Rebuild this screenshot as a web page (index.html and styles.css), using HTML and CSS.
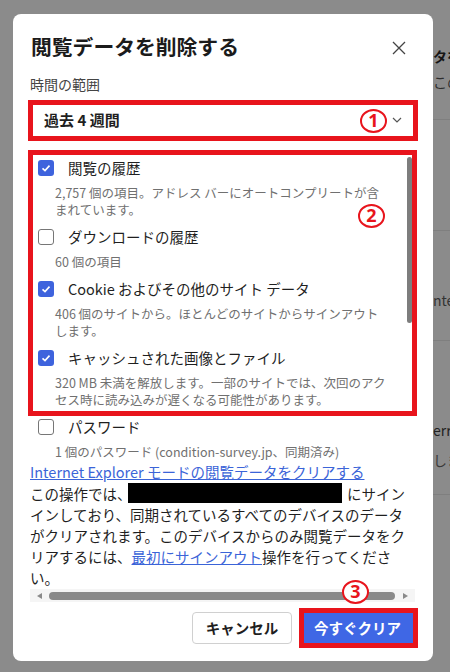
FILE: index.html
```html
<!DOCTYPE html>
<html lang="ja">
<head>
<meta charset="utf-8">
<title>閲覧データを削除する</title>
<link rel="stylesheet" href="styles.css">
</head>
<body>
<div class="behind">
  <div class="bh-title">タを削除</div>
  <div class="bh-text">この</div>
  <div class="bh-line l1"></div>
  <div class="bh-line l2"></div>
  <div class="bh-text t3">nternet</div>
  <div class="bh-line l3"></div>
  <div class="bh-text t4">error</div>
  <div class="bh-text t5">します</div>
  <div class="bh-line l4"></div>
</div>

<div class="dialog">
  <div class="title-row">
    <h1 class="title">閲覧データを削除する</h1>
    <svg class="close" width="14" height="14" viewBox="0 0 14 14"><path d="M1 1 L13 13 M13 1 L1 13" stroke="#444" stroke-width="1.3" fill="none"/></svg>
  </div>
  <div class="field-label">時間の範囲</div>
  <div class="select">
    <span class="select-value">過去 4 週間</span>
    <svg class="chevron" width="10" height="6" viewBox="0 0 10 6"><polyline points="1,1 5,5 9,1" stroke="#555" stroke-width="1.2" fill="none"/></svg>
  </div>

  <div class="scroller">
    <div class="item">
      <div class="row"><span class="cb on"><svg width="16" height="16" viewBox="0 0 16 16"><polyline points="4.5,8.3 7,10.6 11.5,5.6" stroke="#fff" stroke-width="1.6" fill="none"/></svg></span><span class="label">閲覧の履歴</span></div>
      <div class="desc">2,757 個の項目。アドレス バーにオートコンプリートが含<br>まれています。</div>
    </div>
    <div class="item">
      <div class="row"><span class="cb"></span><span class="label">ダウンロードの履歴</span></div>
      <div class="desc">60 個の項目</div>
    </div>
    <div class="item">
      <div class="row"><span class="cb on"><svg width="16" height="16" viewBox="0 0 16 16"><polyline points="4.5,8.3 7,10.6 11.5,5.6" stroke="#fff" stroke-width="1.6" fill="none"/></svg></span><span class="label">Cookie およびその他のサイト データ</span></div>
      <div class="desc">406 個のサイトから。ほとんどのサイトからサインアウト<br>します。</div>
    </div>
    <div class="item">
      <div class="row"><span class="cb on"><svg width="16" height="16" viewBox="0 0 16 16"><polyline points="4.5,8.3 7,10.6 11.5,5.6" stroke="#fff" stroke-width="1.6" fill="none"/></svg></span><span class="label">キャッシュされた画像とファイル</span></div>
      <div class="desc">320 MB 未満を解放します。一部のサイトでは、次回のアク<br>セス時に読み込みが遅くなる可能性があります。</div>
    </div>
    <div class="item">
      <div class="row"><span class="cb"></span><span class="label">パスワード</span></div>
      <div class="desc">1 個のパスワード (condition-survey.jp、同期済み)</div>
    </div>
    <a class="ie-link" href="#">Internet Explorer モードの閲覧データをクリアする</a>
    <p class="note">この操作では、<span class="redact"></span>にサイン<br>インしており、同期されているすべてのデバイスのデータ<br>がクリアされます。このデバイスからのみ閲覧データをク<br>リアするには、<a class="inline-link" href="#">最初にサインアウト</a>操作を行ってくださ<br>い。</p>
    <div class="hscroll">
      <span class="arrow-left"></span>
      <span class="hthumb"></span>
      <span class="arrow-right"></span>
    </div>
  </div>

  <div class="actions">
    <button class="btn cancel">キャンセル</button>
    <button class="btn primary">今すぐクリア</button>
  </div>

  <div class="vthumb"></div>
  <div class="mark box1"></div>
  <div class="mark box2"></div>
  <div class="mark box3"></div>
  <div class="num n1">1</div>
  <div class="num n2">2</div>
  <div class="num n3">3</div>
</div>
</body>
</html>
```

FILE: styles.css
```css
* { box-sizing: border-box; }

html, body {
  margin: 0;
  padding: 0;
}

body {
  width: 450px;
  height: 672px;
  overflow: hidden;
  position: relative;
  background: #8b8b8b;
  font-family: "Noto Sans CJK JP", "Noto Sans", sans-serif;
  color: #1f1f1f;
}

/* page behind the modal */
.behind {
  position: absolute;
  left: 433px;
  top: 0;
  right: 0;
  bottom: 0;
  white-space: nowrap;
  overflow: hidden;
}
.bh-title {
  margin-top: 46px;
  font-size: 14px;
  line-height: 20px;
  font-weight: 700;
  color: #161616;
}
.bh-text {
  margin-top: 6px;
  font-size: 14px;
  line-height: 20px;
  color: #2e2e2e;
}
.bh-line {
  height: 1px;
  background: #7f7f7f;
}
.l1 { margin-top: 27px; }
.l2 { margin-top: 110px; }
.bh-text.t3 { margin-top: 59px; color: #333; }
.l3 { margin-top: 30px; }
.bh-text.t4 { margin-top: 79px; color: #222; }
.bh-text.t5 { margin-top: 10px; color: #3a3a3a; }
.l4 { margin-top: 24px; }

/* dialog */
.dialog {
  position: relative;
  z-index: 1;
  margin: 14px 0 0 13px;
  width: 420px;
  padding: 18px 18px 17px 17px;
  background: #fff;
  border-radius: 8px;
}

.title-row {
  display: flex;
  align-items: center;
  justify-content: space-between;
  height: 28px;
}
.title {
  margin: 0 0 0 1px;
  font-size: 20.8px;
  line-height: 28px;
  font-weight: 700;
  color: #1b1b1b;
}
.close {
  margin: 4px 9px 0 0;
}

.field-label {
  margin-top: 14px;
  font-size: 14px;
  line-height: 20px;
  color: #444;
}

.select {
  margin-top: 8px;
  height: 36px;
  border: 1px solid #c8c8c8;
  border-radius: 4px;
  display: flex;
  align-items: center;
  justify-content: space-between;
  padding: 0 12px 0 13px;
}
.select-value {
  font-size: 15px;
  line-height: 20px;
  font-weight: 700;
  color: #1f1f1f;
}

.scroller {
  padding-top: 18px;
}

.item {
  padding-left: 8px;
}
.item + .item {
  margin-top: 7px;
}
.row {
  display: flex;
  align-items: center;
  height: 24px;
}
.cb {
  width: 16px;
  height: 16px;
  flex: none;
  border: 1px solid #767676;
  border-radius: 3px;
  background: #fff;
  display: flex;
}
.cb.on {
  border: none;
  background: #3e63dd;
}
.label {
  margin-left: 14px;
  font-size: 14.5px;
  line-height: 24px;
  color: #1f1f1f;
  white-space: nowrap;
}
.desc {
  margin-top: 4px;
  padding-left: 17px;
  font-size: 12.5px;
  line-height: 17px;
  color: #707070;
  white-space: nowrap;
}

.ie-link {
  display: block;
  margin-top: 1px;
  font-size: 14.5px;
  line-height: 22px;
  color: #3b64d8;
  text-decoration: underline;
  white-space: nowrap;
}
.note {
  margin: 0;
  font-size: 14.5px;
  line-height: 21px;
  color: #1f1f1f;
  white-space: nowrap;
}
.inline-link {
  color: #3b64d8;
  text-decoration: underline;
}
.redact {
  display: inline-block;
  vertical-align: top;
  width: 214px;
  height: 20px;
  margin: 0 5px 0 -3.5px;
  background: #000;
}

.hscroll {
  margin-top: 1px;
  height: 13px;
  background: #f5f5f5;
  display: flex;
  align-items: center;
  padding: 0 7px;
}
.arrow-left {
  width: 0;
  height: 0;
  border-top: 3.5px solid transparent;
  border-bottom: 3.5px solid transparent;
  border-right: 5px solid #8a8a8a;
}
.arrow-right {
  width: 0;
  height: 0;
  border-top: 3.5px solid transparent;
  border-bottom: 3.5px solid transparent;
  border-left: 5px solid #8a8a8a;
}
.hthumb {
  flex: 1;
  height: 8px;
  margin: 0 8px 0 7px;
  border-radius: 4px;
  background: #8a8a8a;
}

.actions {
  margin-top: 10px;
  display: flex;
  justify-content: flex-end;
  gap: 8px;
}
.btn {
  height: 32px;
  border-radius: 4px;
  font-family: inherit;
  font-size: 14.5px;
  font-weight: 700;
  line-height: 20px;
  padding: 0;
  cursor: pointer;
}
.cancel {
  width: 100px;
  background: #fff;
  border: 1px solid #d0d0d0;
  color: #1f1f1f;
}
.primary {
  width: 115px;
  background: #3f67e5;
  border: 1px solid #3f67e5;
  color: #fff;
}

/* scrollbar thumb over the list */
.vthumb {
  position: absolute;
  left: 394px;
  top: 143px;
  width: 5px;
  height: 166px;
  border-radius: 3px;
  background: #7d7d7d;
}

/* annotation overlays */
.mark {
  position: absolute;
  border: 5px solid #e8141c;
}
.box1 { left: 15px; top: 86px; width: 390px; height: 41px; }
.box2 { left: 15px; top: 136px; width: 389px; height: 266px; }
.box3 { left: 286px; top: 594px; width: 119px; height: 40px; }

.num {
  position: absolute;
  width: 27px;
  height: 24px;
  border: 2.5px solid #e8141c;
  border-radius: 50%;
  background: #fff;
  color: #e8141c;
  font-family: "Open Sans", "Noto Sans", sans-serif;
  font-weight: 700;
  font-size: 18px;
  line-height: 19px;
  text-align: center;
}
.n1 { left: 347px; top: 95px; }
.n2 { left: 345px; top: 190px; }
.n3 { left: 329px; top: 566px; }
```
